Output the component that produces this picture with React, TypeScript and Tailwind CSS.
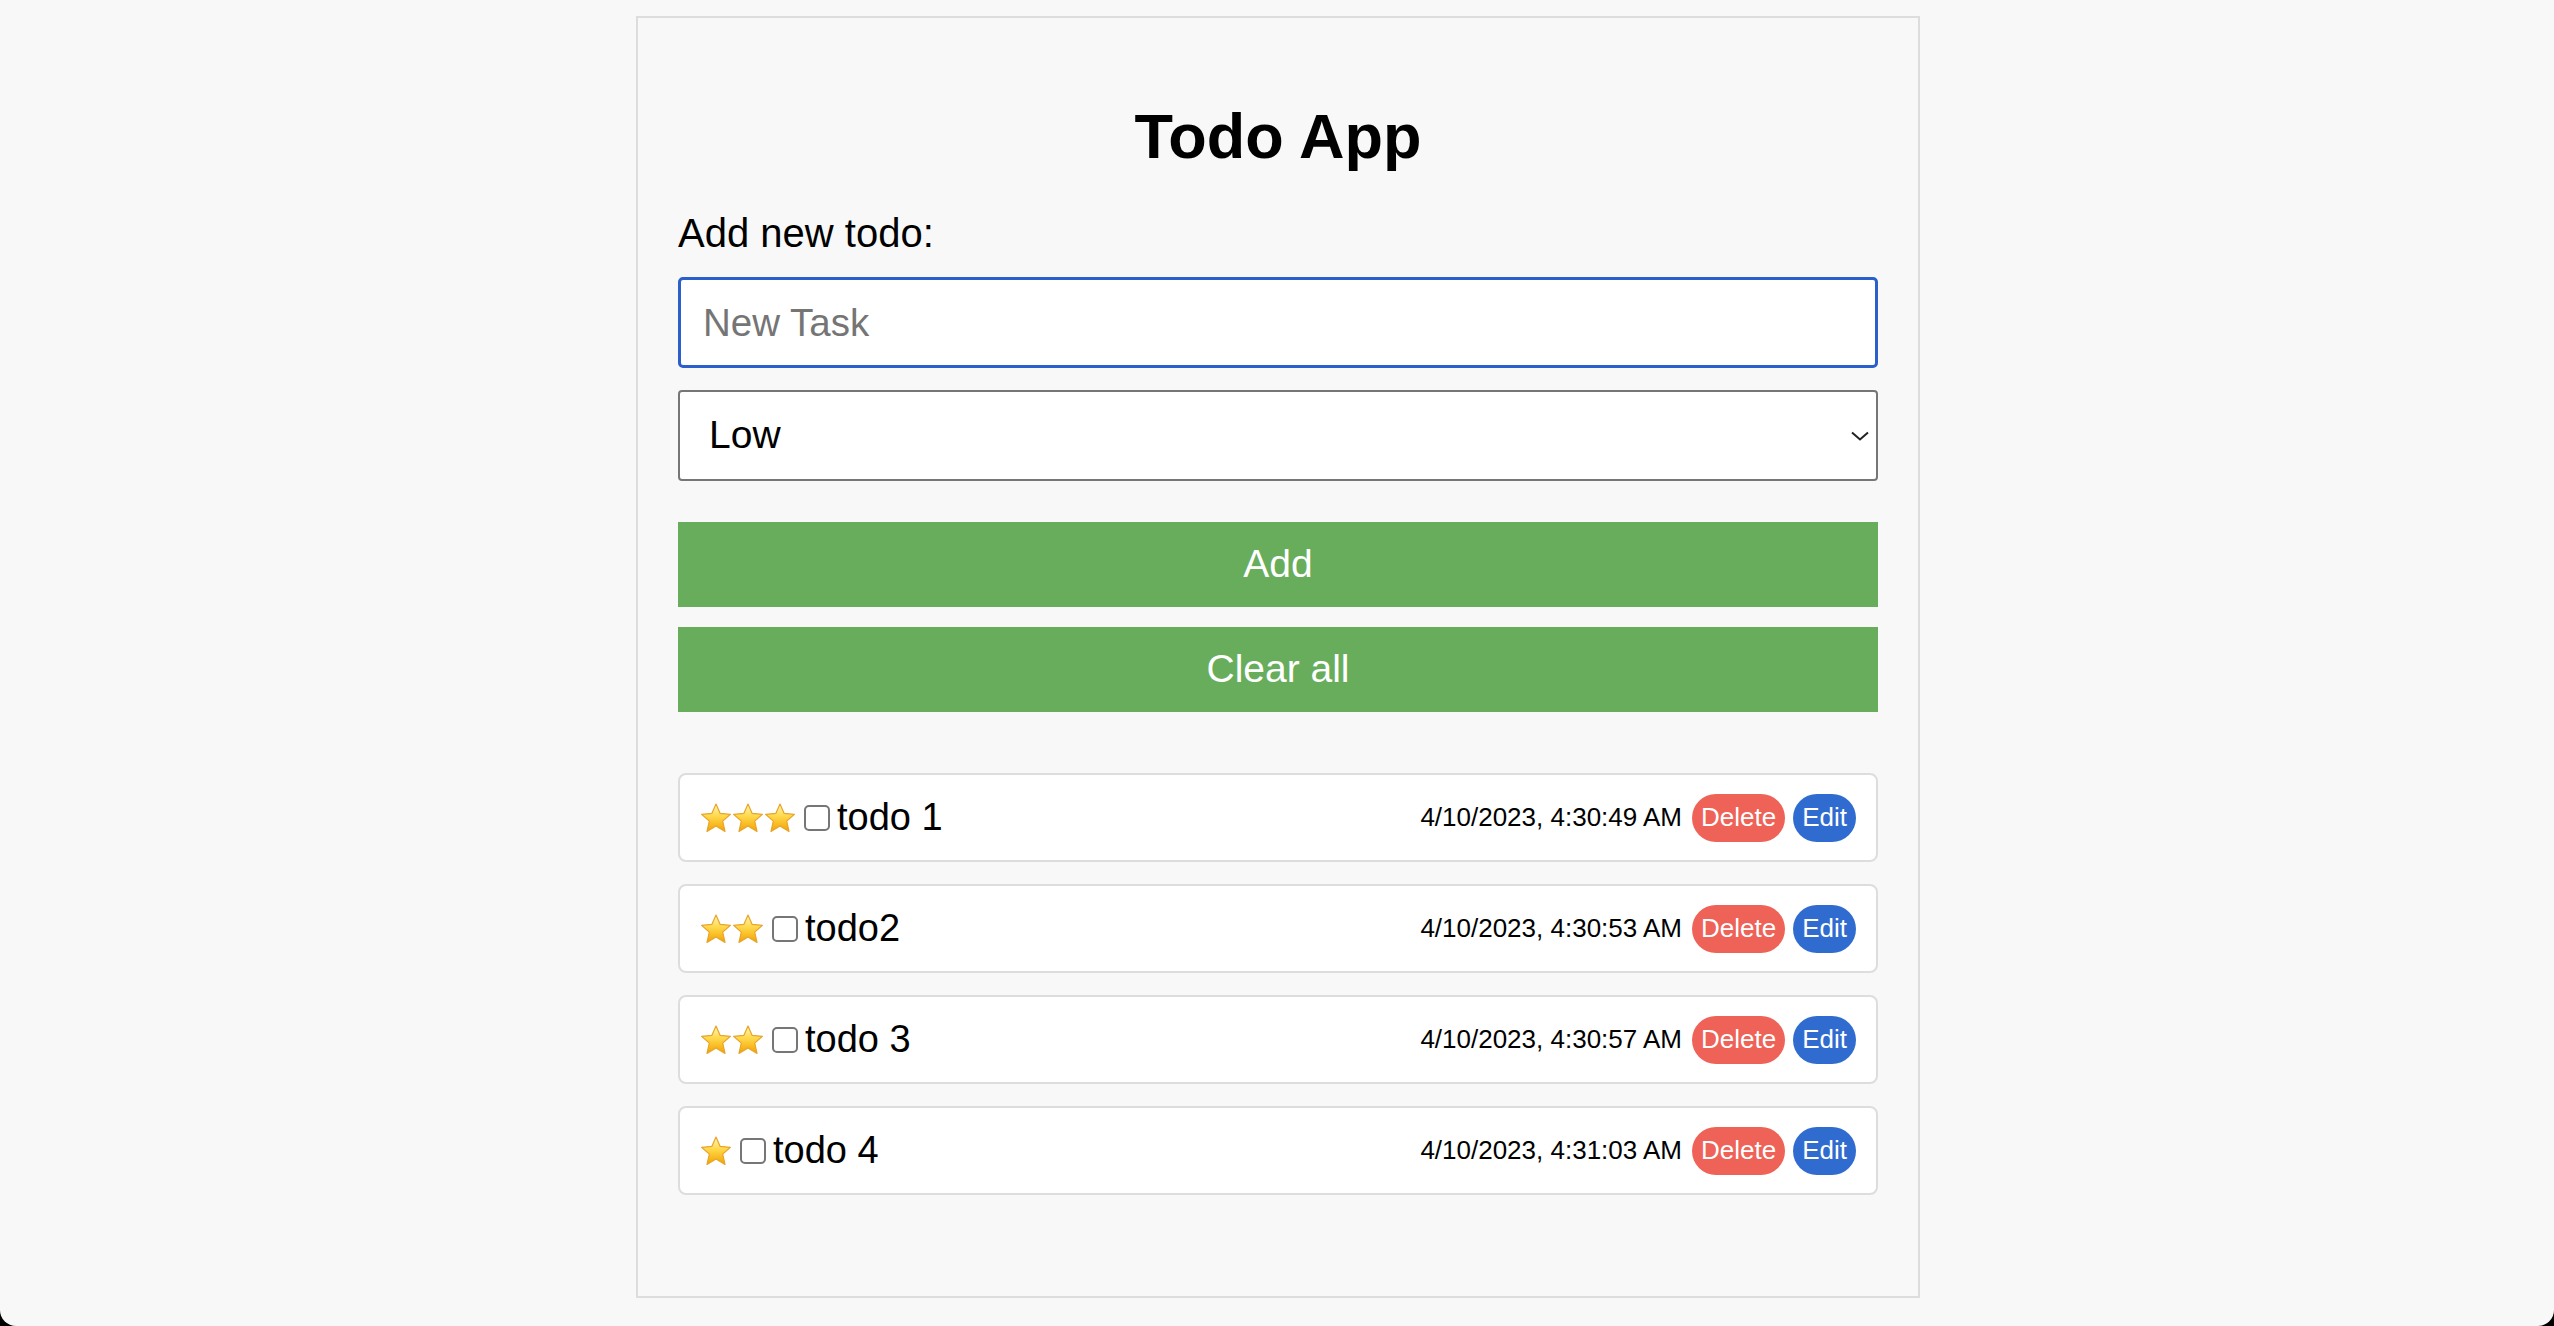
import React from "react";

const font = { fontFamily: '"Liberation Sans", Arial, Helvetica, sans-serif' };

function Star() {
  return (
    <svg width="32" height="30" viewBox="0 0 32 30" className="shrink-0">
      <defs>
        <linearGradient id="starGrad" x1="0" y1="0" x2="0" y2="1">
          <stop offset="0" stopColor="#fff6b8" />
          <stop offset="0.45" stopColor="#ffd84a" />
          <stop offset="1" stopColor="#f2a200" />
        </linearGradient>
      </defs>
      <path
        d="M16 1 L20.2 10.4 L30.4 11.3 L22.7 18.1 L25 28.4 L16 23 L7 28.4 L9.3 18.1 L1.6 11.3 L11.8 10.4 Z"
        fill="url(#starGrad)"
        stroke="#e8a42a"
        strokeWidth="1.2"
        strokeLinejoin="round"
      />
    </svg>
  );
}

const todos = [
  { stars: 3, text: "todo 1", date: "4/10/2023, 4:30:49 AM" },
  { stars: 2, text: "todo2", date: "4/10/2023, 4:30:53 AM" },
  { stars: 2, text: "todo 3", date: "4/10/2023, 4:30:57 AM" },
  { stars: 1, text: "todo 4", date: "4/10/2023, 4:31:03 AM" },
];

export default function App() {
  return (
    <div className="h-[1326px] w-full bg-black" style={font}>
      <div className="flex h-full w-full items-start justify-center overflow-hidden rounded-b-[16px] bg-[#f8f8f8] pt-[16px] pl-[2px]">
        <div className="flex w-[1284px] flex-col border-2 border-[#dddddd] bg-[#f8f8f8] px-[40px] pt-[40px] pb-[101px]">
          <h1 className="mt-[43px] text-center text-[63px] leading-[70px] font-bold text-black">
            Todo App
          </h1>
          <div className="mt-[40px] text-[40px] leading-[45px] text-black">Add new todo:</div>
          <div className="mt-[21px] flex h-[91px] items-center rounded-[5px] border-[3px] border-[#2b5fcb] bg-white px-[22px]">
            <span className="text-[38.5px] text-[#757575]">New Task</span>
          </div>
          <div className="mt-[22px] flex h-[91px] items-center justify-between rounded-[4px] border-2 border-[#767676] bg-white pl-[29px] pr-[7px]">
            <span className="text-[39px] text-black">Low</span>
            <svg width="18" height="10" viewBox="0 0 18 10">
              <path d="M1 1.5 L9 8.5 L17 1.5" fill="none" stroke="#222" strokeWidth="2" />
            </svg>
          </div>
          <div className="mt-[41px] flex h-[85px] items-center justify-center bg-[#68ad5c] text-[39px] text-white">
            Add
          </div>
          <div className="mt-[20px] flex h-[85px] items-center justify-center bg-[#68ad5c] text-[39px] text-white">
            Clear all
          </div>
          <div className="mt-[61px] flex flex-col gap-[22px]">
            {todos.map((t, i) => (
              <div
                key={i}
                className="flex h-[89px] items-center justify-between rounded-[8px] border-2 border-[#dddddd] bg-white px-[20px]"
              >
                <div className="flex items-center">
                  {Array.from({ length: t.stars }).map((_, j) => (
                    <Star key={j} />
                  ))}
                  <span className="ml-[8px] mr-[7px] h-[26px] w-[26px] rounded-[5px] border-2 border-[#767676] bg-white" />
                  <span className="text-[38px] text-black">{t.text}</span>
                </div>
                <div className="flex items-center">
                  <span className="text-[26px] text-black">{t.date}</span>
                  <span className="ml-[10px] flex h-[48px] items-center rounded-full bg-[#ee6257] px-[9px] text-[26px] text-white">
                    Delete
                  </span>
                  <span className="ml-[8px] flex h-[48px] items-center rounded-full bg-[#306cd0] px-[9px] text-[26px] text-white">
                    Edit
                  </span>
                </div>
              </div>
            ))}
          </div>
        </div>
      </div>
    </div>
  );
}
